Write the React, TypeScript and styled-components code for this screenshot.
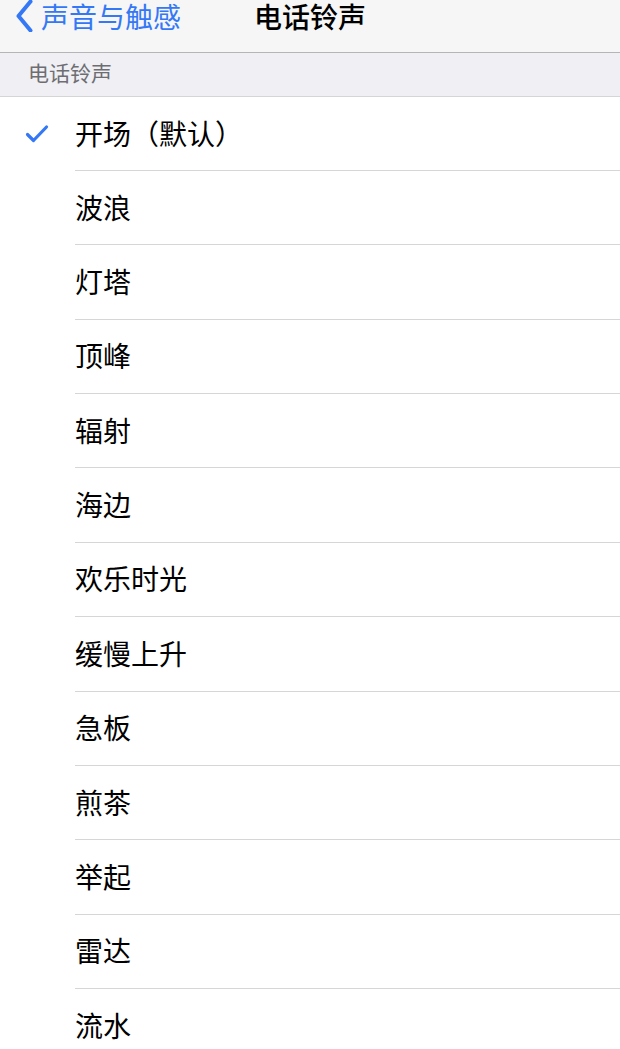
import React from "react";
import styled, { createGlobalStyle } from "styled-components";

const Global = createGlobalStyle`
  html, body { margin: 0; padding: 0; background: #ffffff; }
  body { font-family: "Noto Sans CJK SC", "Noto Sans", sans-serif; -webkit-font-smoothing: antialiased; }
`;

const Page = styled.div`
  width: 620px;
  height: 1049px;
  overflow: hidden;
  background: #ffffff;
  display: flex;
  flex-direction: column;
`;

const NavBar = styled.div`
  height: 53px;
  flex-shrink: 0;
  box-sizing: border-box;
  background: #f6f6f7;
  border-bottom: 1px solid #b5b5b8;
  position: relative;
  display: flex;
  align-items: flex-start;
`;

const BackButton = styled.div`
  display: flex;
  align-items: center;
  gap: 5px;
  height: 32px;
  padding-left: 14px;
  color: #3478f6;
  font-size: 28px;
  line-height: 32px;
`;

const Title = styled.div`
  position: absolute;
  left: 0;
  right: 0;
  top: 0;
  height: 32px;
  line-height: 32px;
  text-align: center;
  font-size: 28px;
  font-weight: 500;
  color: #000;
  pointer-events: none;
`;

const SectionHeader = styled.div`
  height: 44px;
  flex-shrink: 0;
  box-sizing: border-box;
  background: #efeff4;
  border-bottom: 1px solid #d5d5d8;
  padding-left: 28px;
  display: flex;
  align-items: center;
  color: #6d6d72;
  font-size: 21px;
  padding-bottom: 5px;
`;

const List = styled.div`
  display: flex;
  flex-direction: column;
  flex-shrink: 0;
`;

const Row = styled.div<{ $first?: boolean }>`
  height: ${(p) => (p.$first ? "74px" : "74.36px")};
  display: flex;
  align-items: stretch;
  flex-shrink: 0;
`;

const CheckCell = styled.div`
  width: 75px;
  display: flex;
  align-items: center;
  justify-content: flex-start;
  padding-left: 25px;
  box-sizing: border-box;
`;

const Label = styled.div`
  flex: 1;
  display: flex;
  align-items: center;
  font-size: 28px;
  color: #000;
  border-bottom: 1px solid #d6d6d8;
  box-sizing: border-box;
  padding-bottom: 2px;
`;

const items = [
  "开场（默认）",
  "波浪",
  "灯塔",
  "顶峰",
  "辐射",
  "海边",
  "欢乐时光",
  "缓慢上升",
  "急板",
  "煎茶",
  "举起",
  "雷达",
  "流水",
];

export default function App() {
  return (
    <>
      <Global />
      <Page>
        <NavBar>
          <BackButton>
            <svg width="22" height="32" viewBox="0 0 22 32">
              <path
                d="M16.5 1.5 L4.5 16 L16.5 30.5"
                fill="none"
                stroke="#3478f6"
                strokeWidth="4"
                strokeLinecap="round"
                strokeLinejoin="round"
              />
            </svg>
            <span>声音与触感</span>
          </BackButton>
          <Title>电话铃声</Title>
        </NavBar>
        <SectionHeader>电话铃声</SectionHeader>
        <List>
          {items.map((t, i) => (
            <Row key={t} $first={i === 0}>
              <CheckCell>
                {i === 0 && (
                  <svg width="24" height="20" viewBox="0 0 24 20">
                    <path
                      d="M2.5 10.5 L8.5 16.5 L21.5 3"
                      fill="none"
                      stroke="#3478f6"
                      strokeWidth="3.2"
                      strokeLinecap="round"
                      strokeLinejoin="round"
                    />
                  </svg>
                )}
              </CheckCell>
              <Label>{t}</Label>
            </Row>
          ))}
        </List>
      </Page>
    </>
  );
}
